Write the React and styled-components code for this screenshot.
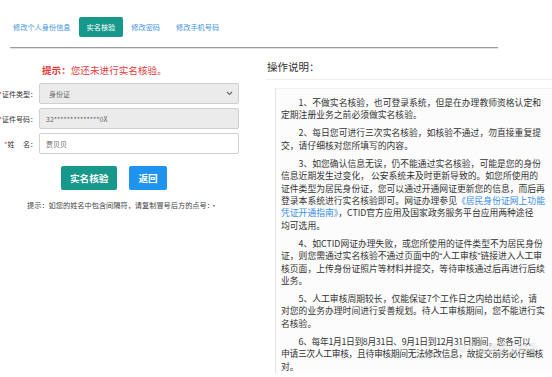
import React from 'react';
import styled, { createGlobalStyle } from 'styled-components';

const GlobalStyle = createGlobalStyle`
  html, body {
    margin: 0;
    padding: 0;
    background: #fff;
  }
  body {
    font-family: 'Noto Sans CJK SC', 'Noto Sans', sans-serif;
    color: #333;
  }
`;

const tabs = ['修改个人身份信息', '实名核验', '修改密码', '修改手机号码'];

const rows = [
  { label: '证件类型：', value: '身份证', kind: 'select' },
  { label: '证件号码：', value: '32**************0X', kind: 'disabled' },
  { label: '姓\u3000\u00a0名：', value: '贾贝贝', kind: 'text' },
];

const notes = [
  ['1、不做实名核验，也可登录系统，但是在办理教师资格认定和', '定期注册业务之前必须做实名核验。'],
  ['2、每日您可进行三次实名核验，如核验不通过，勿直接重复提', '交，请仔细核对您所填写的内容。'],
  [
    '3、如您确认信息无误，仍不能通过实名核验，可能是您的身份',
    '信息近期发生过变化， 公安系统未及时更新导致的。如您所使用的',
    '证件类型为居民身份证，您可以通过开通网证更新您的信息，而后再',
    ['登录本系统进行实名核验即可。网证办理参见', '《居民身份证网上功能'],
    ['', '凭证开通指南》', '，CTID官方应用及国家政务服务平台应用两种途径'],
    '均可选用。',
  ],
  [
    '4、如CTID网证办理失败，或您所使用的证件类型不为居民身份',
    '证，则您需通过实名核验不通过页面中的“人工审核”链接进入人工审',
    '核页面，上传身份证照片等材料并提交，等待审核通过后再进行后续',
    '业务。',
  ],
  [
    '5、人工审核周期较长，仅能保证7个工作日之内给出结论，请',
    '对您的业务办理时间进行妥善规划。待人工审核期间，您不能进行实',
    '名核验。',
  ],
  [
    '6、每年1月1日到8月31日、9月1日到12月31日期间，您各可以',
    '申请三次人工审核，且待审核期间无法修改信息，故提交前务必仔细核',
    '对。',
  ],
];

// curly quotes are drawn narrow in the reference, so give them a latin font
const withQuotes = (text) =>
  text.split(/([“”])/).map((s, i) => (s === '“' || s === '”' ? <Quote key={i}>{s}</Quote> : s));

const renderLine = (line) => {
  if (typeof line === 'string') return withQuotes(line);
  return line.map((part, i) =>
    i % 2 === 1 ? <NoteLink key={i}>{part}</NoteLink> : <React.Fragment key={i}>{part}</React.Fragment>
  );
};

const isLong = (line) => typeof line === 'string' && line.length > 30 && !line.includes('“');

const App = () => (
  <>
    <GlobalStyle />
    <Page>
      <TabBar>
        {tabs.map((t) => (
          <Tab key={t} $active={t === '实名核验'}>
            {t}
          </Tab>
        ))}
      </TabBar>
      <Divider />
      <Columns>
        <LeftColumn>
          <Alert>
            <strong>提示：</strong>您还未进行实名核验。
          </Alert>
          <Form>
            {rows.map((r) => (
              <FormRow key={r.label}>
                <Label>
                  <Star>*</Star>
                  {r.label}
                </Label>
                <Field $kind={r.kind}>
                  <span>{r.value}</span>
                  {r.kind === 'select' && (
                    <svg width="7" height="5" viewBox="0 0 7 5">
                      <path d="M1 1l2.5 2.5L6 1" fill="none" stroke="#666" strokeWidth="1.1" />
                    </svg>
                  )}
                </Field>
              </FormRow>
            ))}
          </Form>
          <ButtonRow>
            <Button $color="#16998a">实名核验</Button>
            <Button $color="#1e94ee">返回</Button>
          </ButtonRow>
          <Hint>提示：如您的姓名中包含间隔符，请复制冒号后方的点号：·</Hint>
        </LeftColumn>
        <RightColumn>
          <Heading>操作说明：</Heading>
          <NoteBox>
            {notes.map((p, i) => (
              <Para key={i}>
                {p.map((line, j) => (
                  <Line key={j} $first={j === 0} $tight={isLong(line)}>
                    {renderLine(line)}
                  </Line>
                ))}
              </Para>
            ))}
          </NoteBox>
          <Watermark>知乎 @教资小助手</Watermark>
        </RightColumn>
      </Columns>
    </Page>
  </>
);

const Page = styled.div`
  width: 552px;
  height: 377px;
  overflow: hidden;
  background: #fff;
  position: relative;
`;

const TabBar = styled.div`
  display: flex;
  padding: 17px 0 0 5px;
  height: 20px;
`;

const Tab = styled.div`
  padding: 0 8px;
  height: 20px;
  line-height: 20px;
  font-size: 7.2px;
  border-radius: 2px;
  color: ${(p) => (p.$active ? '#fff' : '#3f93e0')};
  background: ${(p) => (p.$active ? '#16998a' : 'transparent')};
`;

const Divider = styled.div`
  margin: 10px 0 0 10px;
  width: 488px;
  height: 1px;
  background: #9c9c9c;
  box-shadow: 0 1px 0 #e2e2e2;
`;

const Columns = styled.div`
  display: flex;
`;

const LeftColumn = styled.div`
  width: 266px;
  flex-shrink: 0;
`;

const Alert = styled.div`
  margin: 15px 0 0 42px;
  font-size: 9.6px;
  line-height: 14px;
  color: #e8383b;

  strong {
    font-weight: 700;
  }
`;

const Form = styled.div`
  display: flex;
  flex-direction: column;
  gap: 4px;
  margin-top: 6px;
`;

const FormRow = styled.div`
  display: flex;
  align-items: center;
  gap: 2px;
`;

const Label = styled.div`
  width: 37px;
  display: flex;
  justify-content: flex-end;
  font-size: 7px;
  color: #333;
  white-space: nowrap;
  overflow: hidden;
`;

const Star = styled.span`
  color: #e8383b;
`;

const Field = styled.div`
  width: 200px;
  height: 21px;
  box-sizing: border-box;
  display: flex;
  align-items: center;
  justify-content: space-between;
  padding: 0 5px 0 ${(p) => (p.$kind === 'select' ? '9px' : '6px')};
  border: 1px solid #cfcfcf;
  border-radius: 2px;
  background: ${(p) => (p.$kind === 'text' ? '#fff' : '#ebebeb')};
  font-size: 7px;
  color: #666;
`;

const ButtonRow = styled.div`
  display: flex;
  gap: 12px;
  margin: 12px 0 0 61px;
`;

const Button = styled.div`
  height: 24px;
  line-height: 24px;
  padding: 0 9px;
  border-radius: 2px;
  background: ${(p) => p.$color};
  color: #fff;
  font-size: 9.6px;
  font-weight: 700;
`;

const Hint = styled.div`
  margin: 10px 0 0 27px;
  font-size: 7.2px;
  line-height: 10px;
  color: #444;
  white-space: nowrap;
`;

const RightColumn = styled.div`
  flex: 1;
  position: relative;
`;

const Heading = styled.div`
  margin-top: 12px;
  padding: 0 0 5px 1px;
  font-size: 10.5px;
  line-height: 14px;
  color: #333;
  border-bottom: 1px solid #efefef;
`;

const NoteBox = styled.div`
  margin: 8px 0 0 9px;
  padding: 8px 0 0 5px;
  background: #fcfcfc;
  border-left: 1px solid #e4e4e4;
  border-top: 1px solid #f1f1f1;
  font-size: 8.8px;
  line-height: 12.4px;
  color: #333;
`;

const Para = styled.div`
  margin-bottom: 5.6px;
`;

const Line = styled.div`
  white-space: nowrap;
  padding-left: ${(p) => (p.$first ? '2em' : '0')};
  letter-spacing: ${(p) => (p.$tight ? '-0.35px' : '0')};
`;

const Quote = styled.span`
  font-family: 'Liberation Sans', sans-serif;
`;

const NoteLink = styled.span`
  color: #3a8ee6;
`;

const Watermark = styled.div`
  position: absolute;
  right: 14px;
  bottom: 24px;
  font-size: 10px;
  color: rgba(255, 255, 255, 0.6);
  text-shadow: 0 0 1px rgba(160, 160, 160, 0.45);
  pointer-events: none;
`;

export default App;
